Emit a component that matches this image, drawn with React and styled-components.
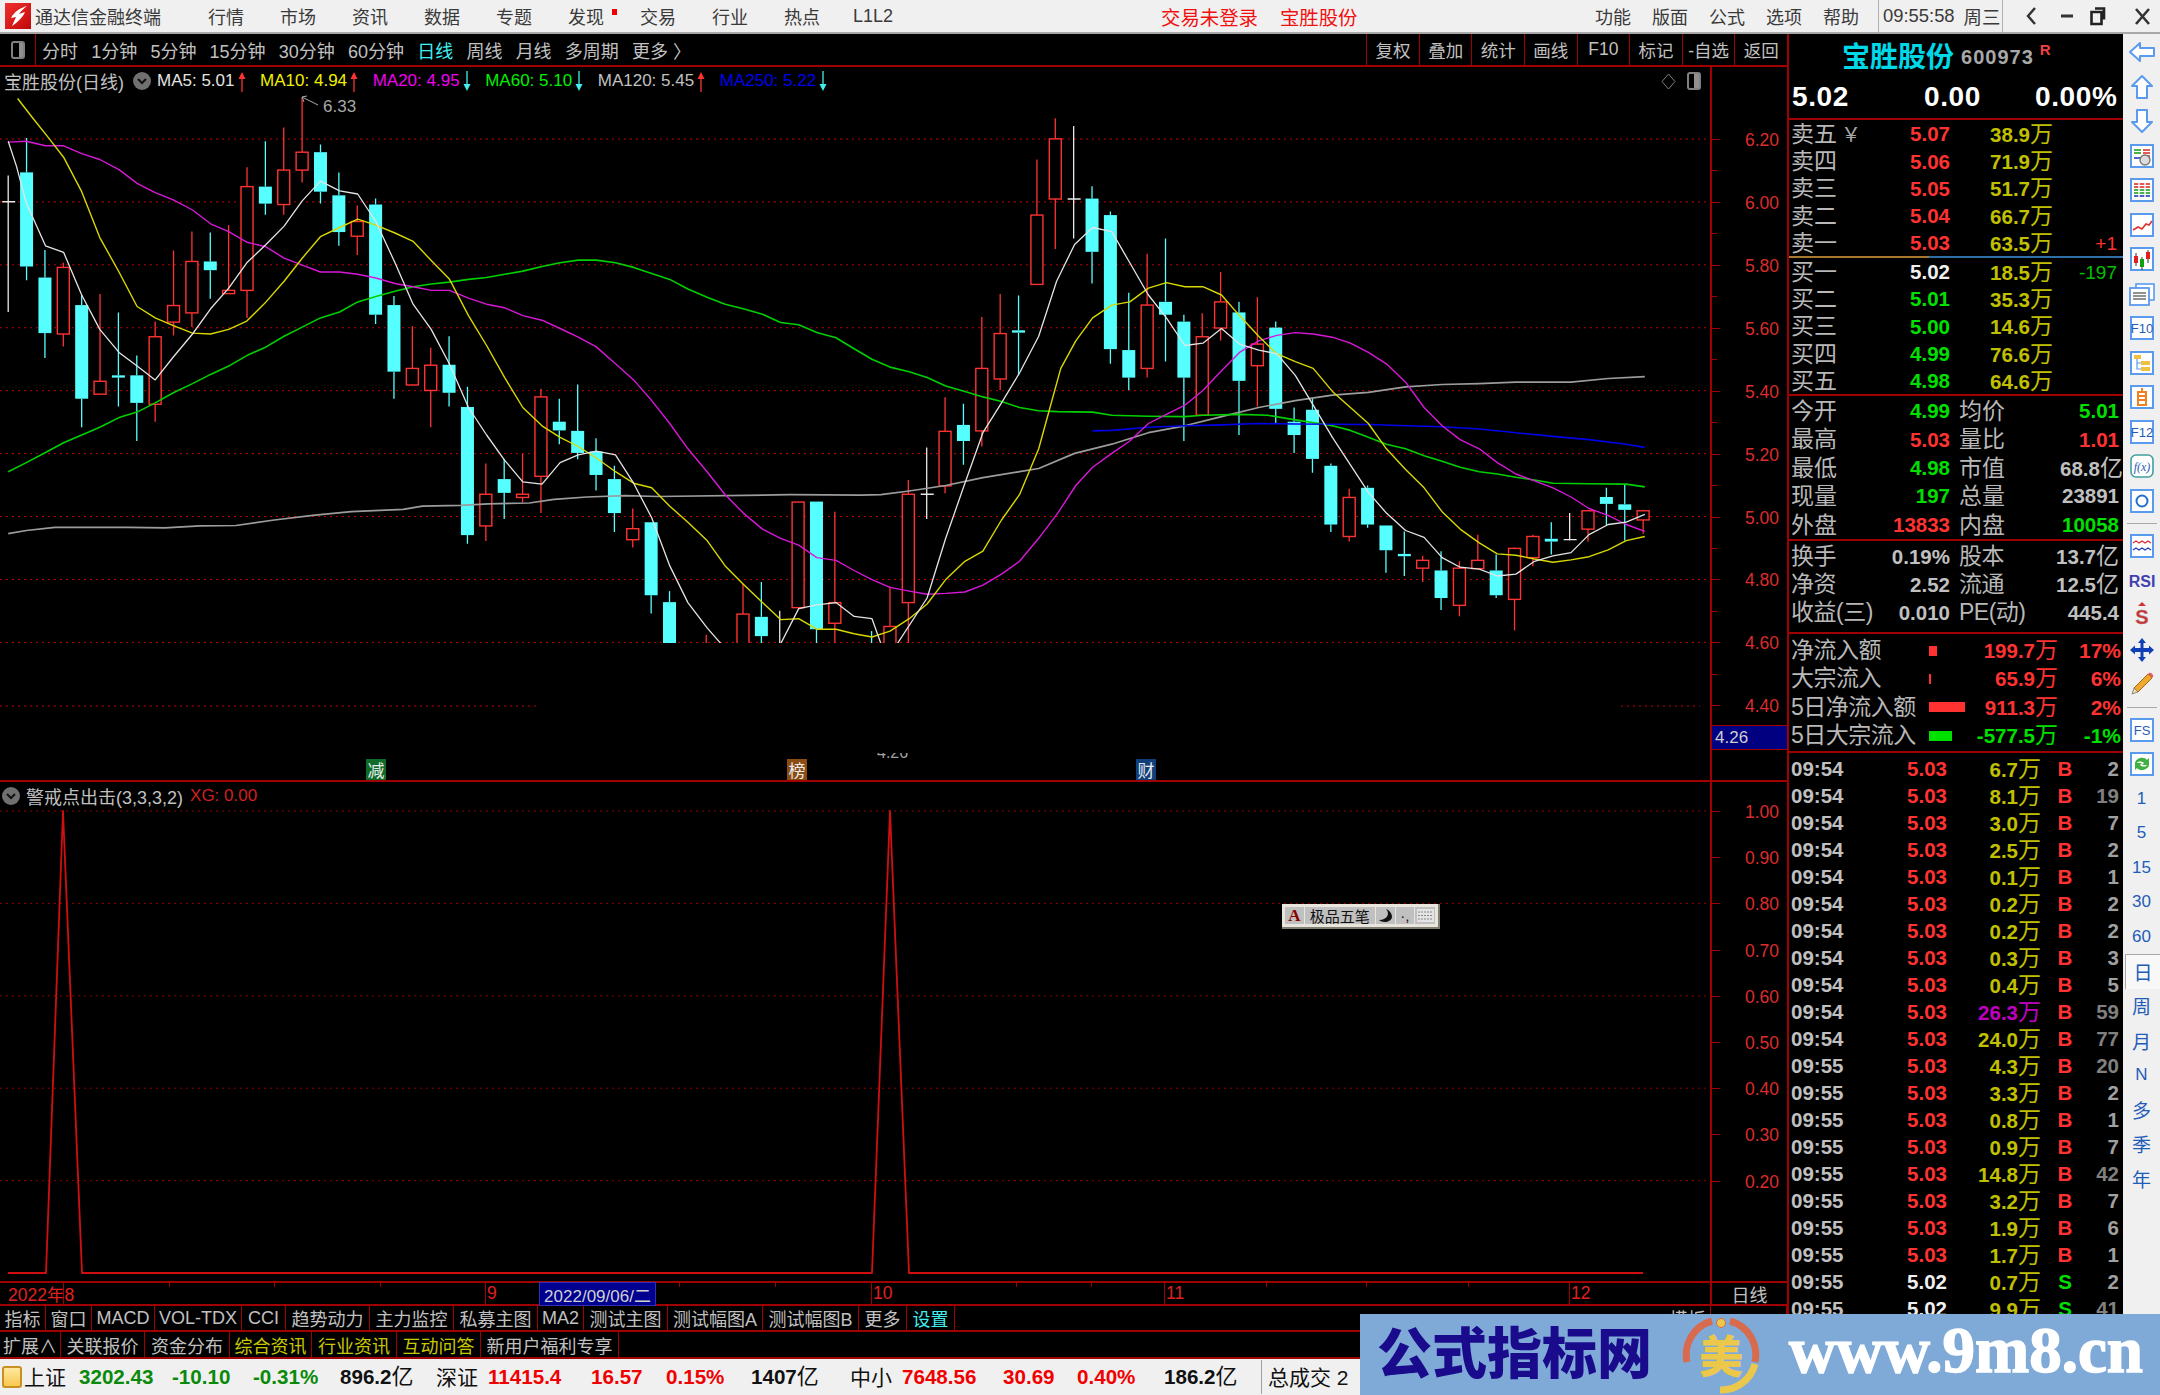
import styled, { createGlobalStyle } from 'styled-components';

const FONT = `"Liberation Sans", "Noto Sans CJK SC", sans-serif`;
const RED_LINE = '#a00000';
const GRAY = '#c0c0c0';
const TXT = {
  red: '#ff3232',
  green: '#00e000',
  white: '#f0f0f0',
  gray: '#c0c0c0',
  dim: '#808080',
  yellow: '#c0c000',
  magenta: '#c000c0',
  cyan: '#40f0f0',
};

// candle data is read off the reference crops: [kind, high, low, bodyTop, bodyBottom]
const zy = (y) => 70 + y / 2.178;
const leftPts = (pts) => pts.map(([x, y]) => [x / 1.823, zy(y)]);
const rightPts = (pts) => pts.map(([x, y]) => [860 + x / 1.668, zy(y)]);
const priceY = (p) => 139 + (6.2 - p) * 314.6;
const subY = (v) => 811 + (1 - v) * 462;

const candles = [
  ['w', 230, 527, 287, 287], ['c', 148, 458, 223, 428], ['c', 392, 627, 452, 573], ['r', 420, 602, 430, 575],
  ['c', 490, 778, 512, 716], ['r', 488, 706, 678, 706], ['c', 528, 733, 665, 670], ['c', 622, 808, 665, 725],
  ['r', 548, 766, 581, 728], ['r', 393, 578, 513, 549], ['r', 352, 560, 417, 529], ['c', 354, 498, 417, 436],
  ['r', 338, 488, 480, 487], ['r', 212, 540, 254, 480], ['c', 155, 315, 254, 291], ['r', 125, 315, 218, 293],
  ['r', 60, 245, 179, 218], ['c', 162, 291, 179, 265], ['c', 223, 383, 273, 353], ['r', 295, 403, 330, 362],
  ['c', 280, 553, 293, 533], ['c', 492, 716, 512, 657], ['r', 558, 687, 650, 686], ['r', 605, 778, 643, 698],
  ['c', 580, 733, 642, 703], ['c', 690, 1032, 734, 1013], ['r', 857, 1026, 924, 993], ['c', 847, 978, 891, 921],
  ['r', 836, 942, 924, 931], ['r', 694, 965, 712, 885], ['c', 716, 815, 766, 785], ['c', 685, 848, 786, 834],
  ['c', 802, 916, 831, 882], ['c', 862, 1006, 891, 965], ['r', 955, 1040, 999, 1023], ['c', 985, 1184, 985, 1144],
  ['c', 1135, 1400, 1159, 1400], null, ['r', 1230, 1400, 1300, 1400], ['c', 1248, 1400, 1300, 1400],
  ['r', 1118, 1400, 1185, 1400], ['c', 1115, 1400, 1191, 1233], ['w', 1178, 1400, 1300, 1300], ['r', 941, 1171, 941, 1171],
  ['c', 940, 1400, 940, 1218], ['r', 962, 1400, 1160, 1205], null, ['c', 1222, 1400, 1300, 1400],
  ['r', 1125, 1400, 1212, 1400], ['r', 893, 1400, 924, 1160], ['w', 822, 978, 924, 924], ['r', 713, 922, 787, 906],
  ['c', 727, 860, 773, 808], ['r', 538, 820, 650, 786], ['r', 488, 697, 574, 673], ['c', 491, 665, 567, 572],
  ['r', 195, 467, 316, 467], ['r', 105, 390, 150, 281], ['w', 122, 367, 281, 281], ['c', 253, 465, 280, 396],
  ['c', 308, 640, 316, 608], ['c', 485, 697, 610, 670], ['r', 400, 670, 512, 650], ['c', 367, 635, 505, 533],
  ['c', 533, 808, 548, 670], ['r', 530, 752, 581, 752], ['r', 440, 589, 505, 562], ['c', 505, 795, 528, 677],
  ['r', 495, 733, 597, 644], ['c', 548, 770, 561, 738], ['c', 735, 834, 766, 795], ['c', 714, 877, 740, 847],
  ['c', 857, 1006, 862, 990], ['r', 912, 1027, 931, 1016], ['c', 905, 997, 910, 990], ['c', 992, 1095, 992, 1046],
  ['c', 1005, 1102, 1054, 1059], ['r', 1058, 1115, 1068, 1085], ['c', 1048, 1176, 1090, 1150], ['r', 1070, 1190, 1085, 1166],
  ['r', 1012, 1086, 1068, 1086], ['c', 1055, 1150, 1090, 1144], ['r', 1040, 1220, 1042, 1153], ['r', 1012, 1081, 1016, 1062],
  ['c', 985, 1055, 1021, 1027], ['w', 965, 1025, 1023, 1023], ['r', 958, 1027, 960, 1000], ['c', 910, 992, 930, 945],
  ['c', 903, 1025, 946, 958], ['r', 958, 1010, 960, 980],
];

const maLines = [
  {
    color: '#9c9c9c', width: 1.7,
    pts: [...leftPts([[15,1010],[48,1003],[100,996],[235,996],[300,997],[365,993],[430,992],[500,980],[570,970],[640,962],[735,957],[770,950],[840,948],[890,945],[965,943],[1010,935],[1070,930],[1140,927],[1200,929],[1440,925],[1568,926]]),
      ...rightPts([[35,925],[82,917],[143,905],[205,888],[266,875],[298,868],[358,835],[420,815],[481,790],[542,775],[603,755],[665,735],[726,720],[788,708],[848,702],[910,690],[971,685],[1033,683],[1094,680],[1186,680],[1248,672],[1309,668]])],
  },
  {
    color: '#00d000', width: 1.6,
    pts: [...leftPts([[15,875],[48,855],[83,833],[116,812],[149,795],[182,778],[217,757],[250,745],[283,725],[316,703],[351,683],[384,663],[417,645],[450,622],[485,603],[518,580],[551,560],[584,540],[619,527],[652,505],[685,493],[720,482],[753,472],[786,466],[819,462],[854,456],[887,452],[920,445],[953,438],[988,428],[1021,420],[1054,414],[1087,414],[1122,420],[1155,430],[1188,443],[1221,456],[1254,477],[1289,495],[1322,510],[1355,520],[1390,532],[1423,550],[1456,555],[1489,572],[1524,583],[1557,607]]),
      ...rightPts([[20,630],[50,647],[82,657],[112,670],[143,688],[175,700],[205,712],[236,722],[266,735],[298,742],[330,744],[388,745],[420,752],[481,754],[542,755],[572,752],[633,750],[680,752],[726,762],[756,768],[788,775],[818,785],[848,800],[878,815],[910,825],[941,840],[971,852],[1001,865],[1033,875],[1063,880],[1094,887],[1125,893],[1156,900],[1216,901],[1278,902],[1309,908]])],
  },
  {
    color: '#0000e8', width: 1.6,
    pts: rightPts([[388,786],[420,785],[481,778],[542,775],[603,773],[665,770],[726,771],[848,772],[910,775],[971,777],[1033,782],[1094,790],[1156,798],[1216,805],[1278,815],[1309,822]]),
  },
  {
    color: '#d818d8', width: 1.4,
    pts: [...leftPts([[15,157],[48,155],[83,165],[116,165],[149,182],[182,195],[217,217],[250,247],[283,267],[316,283],[351,305],[384,335],[417,352],[450,375],[485,385],[518,410],[551,425],[584,440],[619,440],[652,445],[685,453],[720,465],[753,472],[786,480],[819,480],[854,497],[887,510],[920,518],[953,535],[988,545],[1021,563],[1054,582],[1087,603],[1122,640],[1155,675],[1188,720],[1221,770],[1254,825],[1289,875],[1322,925],[1355,965],[1390,1000],[1423,1020],[1456,1035],[1489,1062],[1524,1068],[1557,1090]]),
      ...rightPts([[20,1110],[50,1127],[82,1135],[112,1142],[143,1140],[175,1137],[205,1122],[236,1098],[266,1070],[298,1020],[330,965],[360,905],[388,865],[420,835],[450,808],[481,770],[511,750],[542,730],[572,698],[603,655],[633,615],[665,590],[695,578],[726,572],[756,575],[788,582],[818,595],[848,615],[878,640],[910,680],[941,735],[971,775],[1001,805],[1033,825],[1063,855],[1094,880],[1125,895],[1156,910],[1186,930],[1216,955],[1248,970],[1278,990],[1309,1005]])],
  },
  {
    color: '#d8d800', width: 1.4,
    pts: [...leftPts([[32,62],[60,105],[90,150],[116,190],[149,265],[182,365],[217,440],[250,515],[283,540],[316,557],[351,573],[384,575],[417,565],[450,547],[485,505],[518,460],[551,410],[584,363],[619,343],[652,325],[685,338],[720,355],[753,373],[786,415],[819,455],[854,535],[887,600],[920,670],[953,735],[988,775],[1021,800],[1054,820],[1087,845],[1122,875],[1155,900],[1188,910],[1221,950],[1254,985],[1289,1025],[1322,1080],[1355,1120],[1390,1160],[1423,1197],[1456,1195],[1489,1218],[1524,1218],[1557,1228]]),
      ...rightPts([[20,1235],[50,1222],[82,1195],[112,1163],[143,1110],[175,1070],[205,1048],[236,980],[266,925],[298,825],[316,740],[335,650],[360,590],[388,540],[420,512],[450,505],[481,475],[511,463],[542,472],[572,472],[603,490],[633,535],[665,580],[695,618],[726,635],[756,650],[788,700],[818,735],[848,770],[878,825],[910,870],[941,910],[971,962],[1001,1000],[1033,1030],[1063,1054],[1094,1057],[1125,1065],[1156,1072],[1186,1067],[1216,1060],[1248,1045],[1278,1025],[1309,1016]])],
  },
  {
    color: '#e4e4e4', width: 1.3,
    pts: [...leftPts([[15,155],[30,210],[48,290],[83,383],[116,397],[149,490],[182,565],[217,615],[250,645],[283,675],[316,625],[351,575],[384,520],[417,475],[450,420],[485,380],[518,340],[551,285],[584,242],[619,263],[652,270],[685,330],[720,420],[753,510],[786,565],[819,640],[854,735],[887,795],[920,850],[953,897],[988,902],[1021,855],[1054,838],[1087,830],[1122,838],[1155,900],[1188,975],[1221,1080],[1254,1160],[1289,1215],[1322,1260],[1355,1300],[1390,1300],[1423,1250],[1456,1173],[1489,1165],[1524,1160],[1557,1190]]),
      ...rightPts([[20,1195],[35,1250],[62,1250],[112,1150],[143,1020],[175,900],[205,790],[236,725],[266,660],[298,580],[328,460],[358,380],[388,343],[420,352],[450,420],[481,490],[511,540],[542,600],[572,595],[603,563],[633,597],[665,610],[695,618],[726,665],[756,730],[788,800],[818,860],[848,920],[878,965],[910,1003],[941,1018],[971,1062],[1001,1083],[1033,1087],[1063,1102],[1094,1098],[1125,1070],[1156,1058],[1186,1051],[1216,1012],[1248,990],[1278,985],[1309,968]])],
  },
];

const GlobalStyle = createGlobalStyle`
  html, body { margin: 0; padding: 0; background: #000; }
  * { box-sizing: border-box; }
`;

const Window = styled.div`
  position: relative;
  width: 2160px;
  height: 1395px;
  overflow: hidden;
  background: #000;
  display: flex;
  flex-direction: column;
  font-family: ${FONT};
`;

/* title bar */
const TitleBar = styled.div`
  height: 34px;
  flex: none;
  display: flex;
  align-items: center;
  padding-left: 5px;
  background: #f0f0f0;
  border-bottom: 2px solid #a8a8a8;
  color: #3a3a3a;
  font-size: 18px;
  white-space: nowrap;
`;
const AppName = styled.span`
  margin-left: 4px;
  margin-right: 47px;
`;
const MenuGroup = styled.div`
  display: flex;
  align-items: center;
  gap: ${(p) => p.$gap}px;
`;
const MenuItem = styled.span`
  position: relative;
  width: 36px;
  margin-left: ${(p) => p.$ml || 0}px;
`;
const NewDot = styled.i`
  position: absolute;
  left: 44px;
  top: 6px;
  width: 5px;
  height: 6px;
  background: #f00000;
`;
const Alerts = styled.div`
  display: flex;
  gap: 22px;
  margin-left: 272px;
  color: #f01010;
  font-size: 19.4px;
`;
const RightMenu = styled.div`
  display: flex;
  align-items: center;
  gap: 21px;
  margin-left: auto;
`;
const Clock = styled.div`
  width: 125px;
  height: 32px;
  margin-left: 19px;
  display: flex;
  align-items: center;
  padding-left: 4px;
  gap: 9px;
  border-left: 1px solid #b0b0b0;
  border-right: 1px solid #b0b0b0;
  font-size: 18.4px;
`;
const Controls = styled.div`
  width: 157px;
  height: 32px;
  display: flex;
  align-items: center;
  padding-left: 14px;
`;
const ControlIcon = styled.svg`
  width: 30px;
  height: 22px;
  margin-right: ${(p) => p.$mr || 0}px;
  flex: none;
`;

/* work area */
const Body = styled.div`
  flex: 1;
  min-height: 0;
  display: flex;
`;
const Main = styled.div`
  width: 1787px;
  flex: none;
  display: flex;
  flex-direction: column;
`;
const Toolbar = styled.div`
  height: 33px;
  flex: none;
  display: flex;
  align-items: stretch;
  border-bottom: 2px solid ${RED_LINE};
  color: ${GRAY};
  font-size: 18px;
`;
const PanelToggle = styled.div`
  width: 36px;
  display: flex;
  align-items: center;
  justify-content: center;
  border-right: 1px solid ${RED_LINE};
  margin-right: 6px;
`;
const ToggleGlyph = styled.div`
  width: 14px;
  height: 18px;
  border: 2px solid #808080;
  border-radius: 3px;
  background: linear-gradient(90deg, #000 0 55%, #909090 55%);
`;
const PeriodList = styled.div`
  display: flex;
  align-items: center;
  gap: 13.2px;
`;
const Period = styled.span`
  color: ${(p) => (p.$active ? TXT.cyan : GRAY)};
`;
const ToolButtons = styled.div`
  margin-left: auto;
  display: flex;
`;
const ToolButton = styled.div`
  width: 52.6px;
  display: flex;
  align-items: center;
  justify-content: center;
  border-left: 1px solid ${RED_LINE};
  font-size: 17.5px;
`;

const Pane = styled.div`
  height: ${(p) => p.$h}px;
  flex: none;
  display: flex;
  border-bottom: 2px solid ${RED_LINE};
`;
const Plot = styled.div`
  position: relative;
  width: 1712px;
  flex: none;
  border-right: 2px solid ${RED_LINE};
  overflow: hidden;
`;
const PlotSvg = styled.svg`
  display: block;
`;
const Axis = styled.div`
  position: relative;
  flex: 1;
  overflow: hidden;
`;
const AxisLabel = styled.span`
  position: absolute;
  left: 33px;
  margin-top: 1px;
  transform: translateY(-50%);
  color: #dc2c2c;
  font-size: 17.5px;
`;
const AxisTick = styled.i`
  position: absolute;
  left: 0;
  width: ${(p) => (p.$major ? 8 : 5)}px;
  height: 1px;
  background: ${RED_LINE};
`;
const LastPrice = styled.div`
  position: absolute;
  left: 0;
  right: 0;
  top: 658px;
  height: 25px;
  padding-left: 3px;
  display: flex;
  align-items: center;
  background: #000080;
  border-top: 1px solid ${RED_LINE};
  border-bottom: 1px solid ${RED_LINE};
  color: #d0d0d0;
  font-size: 17px;
`;
const Legend = styled.div`
  position: absolute;
  top: 0;
  left: 4px;
  height: 28px;
  display: flex;
  align-items: center;
  font-size: 17px;
  white-space: nowrap;
`;
const LegendName = styled.span`
  color: ${GRAY};
  font-size: 18px;
  margin-right: ${(p) => p.$mr}px;
`;
const Chevron = styled.span`
  width: 18px;
  height: 18px;
  margin-left: ${(p) => p.$ml || 0}px;
  border-radius: 50%;
  background: #707070;
  color: #111;
  margin-right: 6px;
  display: flex;
  align-items: center;
  justify-content: center;
`;
const MaValue = styled.span`
  color: ${(p) => p.$color};
  display: flex;
  align-items: center;
  gap: 3px;
  margin-right: 14.6px;
`;
const CornerTools = styled.div`
  position: absolute;
  top: 5px;
  left: 1661px;
  display: flex;
  align-items: center;
  gap: 11px;
`;
const Flag = styled.span`
  position: absolute;
  top: 692px;
  left: ${(p) => p.$x}px;
  width: 20px;
  height: 21px;
  display: flex;
  align-items: center;
  justify-content: center;
  background: ${(p) => p.$bg};
  color: #eaeaea;
  font-size: 17px;
`;
const FadedLow = styled.span`
  position: absolute;
  left: 877px;
  top: 677px;
  color: #a0a0a0;
  font-size: 16px;
  clip-path: inset(50% 0 0 0);
`;
const ImeBar = styled.div`
  position: absolute;
  left: 1282px;
  top: 122px;
  width: 158px;
  height: 25px;
  display: flex;
  gap: 1px;
  padding: 3px 3px 3px 3px;
  background: #e8e6dc;
  border-right: 2px solid #807e72;
  border-bottom: 2px solid #807e72;
`;
const ImeKey = styled.div`
  width: ${(p) => p.$w}px;
  display: flex;
  align-items: center;
  justify-content: center;
  background: #c0c0c0;
  color: #111;
  font-size: 15px;
`;
const ImeLetter = styled.span`
  color: #8a0000;
  font-family: "Liberation Serif", serif;
  font-weight: bold;
  font-size: 17px;
`;

/* date axis and tab rows */
const DateRow = styled.div`
  height: 23px;
  flex: none;
  display: flex;
  border-bottom: 2px solid ${RED_LINE};
`;
const DateAxis = styled.div`
  position: relative;
  width: 1712px;
  border-right: 2px solid ${RED_LINE};
`;
const DateMark = styled.span`
  position: absolute;
  top: 0;
  bottom: 0;
  left: ${(p) => p.$x}px;
  padding-left: 1px;
  display: flex;
  align-items: center;
  color: #e02020;
  font-size: 17.5px;
  white-space: nowrap;
  border-left: 1px solid ${RED_LINE};
`;
const DateStart = styled.span`
  position: absolute;
  left: 8px;
  top: 0;
  bottom: 0;
  display: flex;
  align-items: center;
  color: #e02020;
  font-size: 17.5px;
`;
const DateTick = styled.i`
  position: absolute;
  top: 0;
  left: ${(p) => p.$x}px;
  width: 1px;
  height: ${(p) => p.$h || 4}px;
  background: ${RED_LINE};
`;
const CursorDate = styled.span`
  position: absolute;
  left: 539px;
  top: -1px;
  width: 117px;
  height: 24px;
  display: flex;
  align-items: center;
  justify-content: center;
  background: #000090;
  color: #d0d0d0;
  font-size: 17px;
  border: 1px solid #3030b0;
`;
const DateCell = styled.div`
  flex: 1;
  display: flex;
  align-items: center;
  justify-content: center;
  color: ${GRAY};
  font-size: 18px;
`;
const TabRow = styled.div`
  height: ${(p) => p.$h}px;
  flex: none;
  display: flex;
  border-bottom: 2px solid ${RED_LINE};
`;
const Tab = styled.div`
  width: ${(p) => p.$w}px;
  flex: none;
  display: flex;
  align-items: center;
  justify-content: center;
  border-right: 1px solid ${RED_LINE};
  color: ${(p) => p.$color || GRAY};
  font-size: 18px;
  white-space: nowrap;
  overflow: hidden;
  margin-left: ${(p) => (p.$push ? 'auto' : 0)};
`;

/* quote panel */
const Panel = styled.div`
  width: 336px;
  flex: none;
  border-left: 2px solid ${RED_LINE};
  overflow: hidden;
`;
const NameRow = styled.div`
  height: 42px;
  padding-left: 53px;
  display: flex;
  align-items: center;
`;
const StockName = styled.span`
  color: #00d8e8;
  font-size: 28px;
  font-weight: bold;
`;
const StockCode = styled.span`
  margin-left: 7px;
  margin-top: 4px;
  color: #a8a8a8;
  font-size: 20px;
  font-weight: bold;
  letter-spacing: 1px;
`;
const StockFlag = styled.span`
  margin-left: 6px;
  margin-top: -12px;
  color: #f04040;
  font-size: 15px;
  font-weight: bold;
`;
const PriceRow = styled.div`
  height: 44px;
  padding-left: 3px;
  display: grid;
  grid-template-columns: 132px 111px 1fr;
  align-items: center;
  color: #fff;
  font-size: 28px;
  font-weight: bold;
  letter-spacing: 0.6px;
  border-bottom: 2px solid ${RED_LINE};
`;
const SplitLine = styled.div`
  height: 2px;
  background: linear-gradient(90deg, #a87830 0 140px, #2f6fa8 140px);
`;
const Section = styled.div`
  padding-bottom: ${(p) => p.$pb || 0}px;
  border-bottom: ${(p) => (p.$line ? `2px solid ${RED_LINE}` : 'none')};
`;
const Row = styled.div`
  height: ${(p) => p.$h}px;
  padding-left: 2px;
  padding-top: ${(p) => p.$pt || 0}px;
  display: grid;
  grid-template-columns: ${(p) => p.$cols};
  grid-template-rows: 100%;
  align-items: center;
  white-space: nowrap;
  line-height: 1;
`;
const Label = styled.span`
  color: #b8b8b8;
  font-size: 23px;
  padding-left: ${(p) => p.$pl || 0}px;
  letter-spacing: ${(p) => (p.$tight ? '-0.5px' : 0)};
`;
const Num = styled.span`
  color: ${(p) => p.$color || TXT.gray};
  font-size: ${(p) => p.$size || 20.5}px;
  font-weight: ${(p) => (p.$thin ? 'normal' : 'bold')};
  text-align: ${(p) => p.$align || 'right'};
`;
const Unit = styled.span`
  font-size: 23px;
  font-weight: normal;
`;
const FlowBar = styled.i`
  display: block;
  height: ${(p) => p.$h || 10}px;
  width: ${(p) => p.$w}px;
  background: ${(p) => p.$color};
`;
const CashMark = styled.span`
  color: #a8a8a8;
  font-size: 20px;
  margin-left: 4px;
`;

/* sidebar */
const Sidebar = styled.div`
  flex: 1;
  padding-top: 1px;
  background: #f0f0f0;
  display: flex;
  flex-direction: column;
`;
const Slot = styled.div`
  height: 34.5px;
  flex: none;
  display: flex;
  align-items: center;
  justify-content: center;
  color: #1f5cb8;
  font-size: ${(p) => p.$size || 19}px;
  background: ${(p) => (p.$active ? '#f8f8f8' : 'transparent')};
  border-top: ${(p) => (p.$active ? '1px solid #a8a8a8' : 'none')};
  border-left: ${(p) => (p.$active ? '1px solid #a8a8a8' : 'none')};
  margin-left: ${(p) => (p.$active ? 2 : 0)}px;
`;
const SideRule = styled.div`
  height: 11px;
  flex: none;
  position: relative;
  &::after {
    content: '';
    position: absolute;
    left: 4px;
    right: 3px;
    top: 5px;
    height: 1px;
    background: #a8a8a8;
  }
`;

/* status bar */
const StatusBar = styled.div`
  height: 36px;
  flex: none;
  display: flex;
  align-items: center;
  padding-left: 2px;
  background: #f0f0f0;
  white-space: nowrap;
  line-height: 1;
`;
const IndexBadge = styled.i`
  width: 20px;
  height: 22px;
  margin-right: 2px;
  border: 2px solid #c89020;
  border-radius: 3px;
  background: linear-gradient(#ffe8a0, #f8c850);
`;
const StatusCell = styled.span`
  width: ${(p) => p.$w}px;
  flex: none;
  color: ${(p) => p.$color || '#111'};
  font-size: ${(p) => (p.$cjk ? 21 : 20.6)}px;
  font-weight: ${(p) => (p.$cjk ? 'normal' : 'bold')};
`;
const StatusUnit = styled.span`
  font-size: 22px;
  font-weight: normal;
`;
const TotalCell = styled(StatusCell)`
  border-left: 1px solid #a0a0a0;
  padding-left: 6px;
  height: 34px;
  display: flex;
  align-items: center;
`;

/* site stamp over the lower right corner */
const Stamp = styled.div`
  position: absolute;
  left: 1360px;
  top: 1314px;
  width: 800px;
  height: 81px;
  display: flex;
  align-items: center;
  padding-left: 17px;
  background: #7faad8;
  white-space: nowrap;
`;
const StampTitle = styled.span`
  width: 275px;
  color: #1a0a8c;
  font-size: 55px;
  font-weight: 900;
  line-height: 1;
`;
const StampEmblem = styled.svg`
  margin-left: 30px;
  flex: none;
`;
const StampUrl = styled.span`
  margin-left: 29px;
  margin-top: -8px;
  color: #fff;
  font-family: "Liberation Serif", serif;
  font-size: 65px;
  font-weight: bold;
  -webkit-text-stroke: 1.5px #fff;
`;

const Arrow = ({ up, color }) => (
  <svg width="8" height="21" viewBox="0 0 8 21">
    {up ? (
      <>
        <path d="M4 8v13" stroke={color} strokeWidth="1.3" />
        <path d="M0.5 8 4 1l3.5 7z" fill={color} />
      </>
    ) : (
      <>
        <path d="M4 0v13" stroke={color} strokeWidth="1.3" />
        <path d="M0.5 13 4 20l3.5-7z" fill={color} />
      </>
    )}
  </svg>
);

const ChevronGlyph = () => (
  <svg width="10" height="7" viewBox="0 0 10 7">
    <path d="M1 1l4 4 4-4" fill="none" stroke="#111" strokeWidth="2" />
  </svg>
);

const AppLogo = () => (
  <svg width="26" height="26" viewBox="0 0 26 26">
    <defs>
      <linearGradient id="logoRed" x1="0" y1="0" x2="1" y2="1">
        <stop offset="0" stopColor="#f03030" />
        <stop offset="1" stopColor="#c00808" />
      </linearGradient>
    </defs>
    <rect width="26" height="26" fill="url(#logoRed)" />
    <path d="M22 3C15 5 9 9 6 15l5-1-4 9c5-3 11-9 13-14l-6 2c2-3 5-6 8-8z" fill="#fff" />
  </svg>
);

const Frame = ({ children, w = 24, h = 24 }) => (
  <svg width={w} height={h} viewBox="0 0 24 24">
    <rect x="1" y="1" width="22" height="22" fill="#fff" stroke="#5a9bf0" strokeWidth="2" />
    {children}
  </svg>
);

const lines = (color, ys, x1, x2) =>
  ys.map((y) => <path key={`${color}${y}${x1}`} d={`M${x1} ${y}H${x2}`} stroke={color} strokeWidth="1.6" />);

const FrameText = ({ children, size = 11, color = '#1f5cb8' }) => (
  <text x="12" y="16.5" textAnchor="middle" fontSize={size} fontFamily="Liberation Sans" fill={color}>
    {children}
  </text>
);

const HollowArrow = ({ d, w = 28, h = 24 }) => (
  <svg width={w} height={h} viewBox="0 0 28 24">
    <path d={d} fill="#fff" stroke="#5a9bf0" strokeWidth="2" strokeLinejoin="round" />
  </svg>
);

const sideIcons = [
  <HollowArrow key="a1" d="M2 12 12 3v5h14v8H12v5z" />,
  <HollowArrow key="a2" d="M14 1 24 11h-5v12H9V11H4z" />,
  <HollowArrow key="a3" d="M14 23 24 13h-5V1H9v12H4z" />,
  <Frame key="b1">
    {lines('#20a020', [6, 9], 4, 11)}{lines('#e03030', [6, 9, 12], 13, 20)}{lines('#2040c0', [14], 4, 11)}
    <circle cx="15" cy="16" r="5" fill="#ddd" stroke="#777" strokeWidth="1.4" />
  </Frame>,
  <Frame key="b2">
    {lines('#e03030', [6, 9], 4, 20)}{lines('#20a020', [12, 15], 4, 20)}{lines('#2040c0', [18], 4, 20)}
    <path d="M9 4v16M15 4v16" stroke="#fff" strokeWidth="1.4" />
  </Frame>,
  <Frame key="b3"><path d="M3 17l5-3 4 2 4-5 3 1 3-4" fill="none" stroke="#e03030" strokeWidth="1.6" /></Frame>,
  <Frame key="b4">
    <path d="M6 6v13M12 10v13M18 3v13" stroke="#333" strokeWidth="1" />
    <rect x="4" y="9" width="4" height="7" fill="#e02020" />
    <rect x="10" y="12" width="4" height="8" fill="#10a010" />
    <rect x="16" y="5" width="4" height="7" fill="#e02020" />
  </Frame>,
  <svg key="b5" width="26" height="24" viewBox="0 0 26 24">
    <rect x="7" y="2" width="18" height="16" fill="#fff" stroke="#5a9bf0" strokeWidth="1.6" />
    <rect x="1" y="6" width="19" height="17" fill="#fff" stroke="#5a9bf0" strokeWidth="1.8" />
    {lines('#777', [11, 14, 17], 4, 17)}
  </svg>,
  <Frame key="b6"><FrameText size={13}>F10</FrameText></Frame>,
  <Frame key="b7">
    <rect x="4" y="4" width="7" height="4" fill="#f0c040" />
    <rect x="11" y="10" width="9" height="4" fill="#f0c040" />
    <rect x="11" y="16" width="9" height="4" fill="#f0c040" />
    <path d="M7 8v10h4M7 12h4" fill="none" stroke="#5a9bf0" strokeWidth="1.2" />
  </Frame>,
  <Frame key="b8">
    <path d="M8 7h8v13H8zM8 11h8M8 15h8M12 3v4" fill="none" stroke="#f08020" strokeWidth="2" />
  </Frame>,
  <Frame key="b9"><FrameText size={13}>F12</FrameText></Frame>,
  <svg key="b10" width="24" height="24" viewBox="0 0 24 24">
    <rect x="1" y="1" width="22" height="22" rx="5" fill="#fff" stroke="#40a0a0" strokeWidth="1.6" />
    <text x="12" y="17" textAnchor="middle" fontSize="12" fontFamily="Liberation Serif" fontStyle="italic" fill="#1f5cb8">f(x)</text>
  </svg>,
  <Frame key="b11"><circle cx="12" cy="12" r="5.5" fill="none" stroke="#2070d0" strokeWidth="2" /></Frame>,
  'rule',
  <Frame key="c1">
    <path d="M3 9l3-2 3 2 3-2 3 2 3-2 3 2" fill="none" stroke="#e03030" strokeWidth="1.4" />
    <path d="M3 16l3-2 3 2 3-2 3 2 3-2 3 2" fill="none" stroke="#2040c0" strokeWidth="1.4" />
  </Frame>,
  <svg key="c2" width="28" height="24" viewBox="0 0 28 24">
    <text x="14" y="18" textAnchor="middle" fontSize="16" fontWeight="bold" fontFamily="Liberation Sans" fill="#4040b0">RSI</text>
  </svg>,
  <svg key="c3" width="24" height="26" viewBox="0 0 24 26">
    <path d="M12 0l4 4H8z" fill="#d03030" />
    <text x="12" y="22" textAnchor="middle" fontSize="20" fontWeight="bold" fontFamily="Liberation Sans" fill="#d03030" stroke="#999" strokeWidth="0.4">S</text>
  </svg>,
  <svg key="c4" width="26" height="26" viewBox="0 0 26 26">
    <path d="M13 1l4 5h-2.500v5H20V8.500l5 4.500-5 4.500V15h-5.500v5H17l-4 5-4-5h2.500v-5H6v2.500L1 13l5-4.500V11h5.500V6H9z" fill="#1040b8" />
  </svg>,
  <svg key="c5" width="26" height="26" viewBox="0 0 26 26">
    <path d="M5 17 19 3l4 4L9 21z" fill="#f0a830" stroke="#a06818" strokeWidth="1" />
    <path d="M5 17l4 4-6 2z" fill="#f0d8a8" stroke="#777" strokeWidth="0.8" />
    <path d="M19 3l4 4 1-1c1-2-2-5-4-4z" fill="#e06060" />
  </svg>,
  'rule',
  <Frame key="d1"><FrameText size={13}>FS</FrameText></Frame>,
  <Frame key="d2">
    <path d="M5 11c1-5 9-7 12-3l2-2v7h-7l2-2c-2-2-6-2-7 0zM19 13c-1 5-9 7-12 3l-2 2v-7h7l-2 2c2 2 6 2 7 0z" fill="#40b040" />
  </Frame>,
];

const sidePeriods = [
  { t: '1', size: 17 }, { t: '5', size: 17 }, { t: '15', size: 17 }, { t: '30', size: 17 }, { t: '60', size: 17 },
  { t: '日', active: true }, { t: '周' }, { t: '月' }, { t: 'N', size: 17 }, { t: '多' }, { t: '季' }, { t: '年' },
];

const periods = ['分时', '1分钟', '5分钟', '15分钟', '30分钟', '60分钟', '日线', '周线', '月线', '多周期'];
const tools = ['复权', '叠加', '统计', '画线', 'F10', '标记', '-自选', '返回'];
const maLegend = [
  { t: 'MA5: 5.01', c: '#e4e4e4', up: true },
  { t: 'MA10: 4.94', c: '#f0f000', up: true },
  { t: 'MA20: 4.95', c: '#f000f0', up: false },
  { t: 'MA60: 5.10', c: '#00f000', up: false },
  { t: 'MA120: 5.45', c: '#c0c0c0', up: true },
  { t: 'MA250: 5.22', c: '#0000f0', up: false },
];
const tabsA = [
  ['指标', 46], ['窗口', 46], ['MACD', 63], ['VOL-TDX', 87], ['CCI', 44], ['趋势动力', 84], ['主力监控', 84],
  ['私募主图', 84], ['MA2', 46], ['测试主图', 84], ['测试幅图A', 95], ['测试幅图B', 96], ['更多', 48],
];
const tabsB = [
  ['扩展∧', 61], ['关联报价', 84], ['资金分布', 85], ['综合资讯', 82, '#c8c800'], ['行业资讯', 85, '#c8c800'],
  ['互动问答', 84, '#c8c800'], ['新用户福利专享', 138],
];

const sells = [
  ['卖五', '5.07', '38.9'], ['卖四', '5.06', '71.9'], ['卖三', '5.05', '51.7'], ['卖二', '5.04', '66.7'], ['卖一', '5.03', '63.5'],
];
const buys = [
  ['买一', '5.02', '18.5', TXT.white], ['买二', '5.01', '35.3', TXT.green], ['买三', '5.00', '14.6', TXT.green],
  ['买四', '4.99', '76.6', TXT.green], ['买五', '4.98', '64.6', TXT.green],
];
const stats = [
  ['今开', '4.99', TXT.green, '均价', '5.01', TXT.green],
  ['最高', '5.03', TXT.red, '量比', '1.01', TXT.red],
  ['最低', '4.98', TXT.green, '市值', '68.8', TXT.gray, '亿'],
  ['现量', '197', TXT.green, '总量', '23891', TXT.gray],
  ['外盘', '13833', TXT.red, '内盘', '10058', TXT.green],
];
const finance = [
  ['换手', '0.19%', '股本', '13.7', '亿'],
  ['净资', '2.52', '流通', '12.5', '亿'],
  ['收益(三)', '0.010', 'PE(动)', '445.4'],
];
const flows = [
  ['净流入额', 8, '199.7', '17%', TXT.red, '#ff3232'],
  ['大宗流入', 1.5, '65.9', '6%', TXT.red, '#ff3232'],
  ['5日净流入额', 36, '911.3', '2%', TXT.red, '#ff3232'],
  ['5日大宗流入', 23, '-577.5', '-1%', TXT.green, '#00e000'],
];
const trades = [
  [4, '6.7', 2], [4, '8.1', 19], [4, '3.0', 7], [4, '2.5', 2], [4, '0.1', 1], [4, '0.2', 2], [4, '0.2', 2],
  [4, '0.3', 3], [4, '0.4', 5], [4, '26.3', 59], [4, '24.0', 77], [5, '4.3', 20], [5, '3.3', 2], [5, '0.8', 1],
  [5, '0.9', 7], [5, '14.8', 42], [5, '3.2', 7], [5, '1.9', 6], [5, '1.7', 1], [5, '0.7', 2], [5, '9.9', 41],
];

const statusCells = [
  { t: '上证', w: 55, cjk: true },
  { t: '3202.43', w: 93, c: '#0a8a0a' },
  { t: '-10.10', w: 81, c: '#0a8a0a' },
  { t: '-0.31%', w: 87, c: '#0a8a0a' },
  { t: '896.2', w: 96, unit: '亿' },
  { t: '深证', w: 52, cjk: true },
  { t: '11415.4', w: 103, c: '#f00000' },
  { t: '16.57', w: 75, c: '#f00000' },
  { t: '0.15%', w: 85, c: '#f00000' },
  { t: '1407', w: 99, unit: '亿' },
  { t: '中小', w: 52, cjk: true },
  { t: '7648.56', w: 101, c: '#f00000' },
  { t: '30.69', w: 74, c: '#f00000' },
  { t: '0.40%', w: 87, c: '#f00000' },
  { t: '186.2', w: 97, unit: '亿' },
];

const toPath = (pts) => pts.map(([x, y], i) => `${i ? 'L' : 'M'}${x.toFixed(1)} ${y.toFixed(1)}`).join('');

const Candle = ({ data, i }) => {
  if (!data) return null;
  const [kind, h, l, top, bot] = data;
  const x = 8.2 + i * 18.37;
  const color = kind === 'c' ? '#55ffff' : kind === 'r' ? '#ff3232' : '#e8e8e8';
  const yh = zy(h);
  const yl = zy(l);
  const yt = zy(top);
  const yb = zy(bot);
  if (kind === 'w') {
    return <path d={`M${x} ${yh}V${yl}M${x - 6} ${yt}H${x + 7}`} stroke={color} strokeWidth="1.3" />;
  }
  return (
    <g>
      <path d={`M${x} ${yh}V${yt}M${x} ${yb}V${yl}`} stroke={color} strokeWidth="1.3" />
      {kind === 'c' ? (
        <rect x={x - 6.5} y={yt} width="13" height={Math.max(yb - yt, 2)} fill={color} />
      ) : (
        <rect x={x - 6} y={yt} width="12" height={Math.max(yb - yt, 2)} fill="#000" stroke={color} strokeWidth="1.4" />
      )}
    </g>
  );
};

const gridPrices = [6.2, 6.0, 5.8, 5.6, 5.4, 5.2, 5.0, 4.8, 4.6];

const MainChart = () => (
  <PlotSvg width="1710" height="713" viewBox="0 67 1710 713">
    <defs>
      <clipPath id="upperArea">
        <rect x="0" y="67" width="1710" height="576" />
      </clipPath>
    </defs>
    {gridPrices.map((p) => (
      <path key={p} d={`M0 ${priceY(p)}H1710`} stroke="#c00000" strokeWidth="1" strokeDasharray="2 4" />
    ))}
    <path d="M0 706H537M1621 706H1700" stroke="#c00000" strokeWidth="1" strokeDasharray="2 4" />
    <g clipPath="url(#upperArea)">
      {candles.map((c, i) => (
        <Candle key={i} data={c} i={i} />
      ))}
      {maLines.map((m) => (
        <path key={m.color} d={toPath(m.pts)} fill="none" stroke={m.color} strokeWidth={m.width} strokeLinejoin="round" />
      ))}
    </g>
    <path d="M302 97l16 8M302 97l5 -1M302 97l2 5" fill="none" stroke="#a8a8a8" strokeWidth="1" />
    <text x="323" y="112" fontSize="17" fontFamily="Liberation Sans" fill="#a8a8a8">6.33</text>
  </PlotSvg>
);

const SubChart = () => (
  <PlotSvg width="1710" height="498" viewBox="0 782 1710 498">
    {[1, 0.8, 0.6, 0.4, 0.2].map((v) => (
      <path key={v} d={`M0 ${subY(v)}H1710`} stroke="#900000" strokeWidth="1" strokeDasharray="2 4" />
    ))}
    <path
      d="M8 1273H46L63 811 82 1273H872L890 811 909 1273H1643"
      fill="none"
      stroke="#d01010"
      strokeWidth="1.8"
      strokeLinejoin="round"
    />
  </PlotSvg>
);

const Moon = () => (
  <svg width="16" height="16" viewBox="0 0 16 16">
    <path d="M9 1c4 4 2 11-7 11 3 3 12 3 13-3 0-4-3-7-6-8z" fill="#111" />
  </svg>
);
const KeyboardGlyph = () => (
  <svg width="17" height="13" viewBox="0 0 17 13">
    <rect width="17" height="13" fill="#e4e4e4" />
    <path d="M1 3h15M1 6.500h15M1 10h15" stroke="#888" strokeWidth="1" strokeDasharray="2 1" />
  </svg>
);

const StampLogo = () => (
  <StampEmblem width="78" height="78" viewBox="0 0 78 78">
    <path d="M5 46A35 35 0 0 1 30 5" fill="none" stroke="#d86a4e" strokeWidth="7" />
    <path d="M48 5A35 35 0 0 1 73 46" fill="none" stroke="#d86a4e" strokeWidth="7" />
    <path d="M73 48A35 35 0 0 1 38 74" fill="none" stroke="#ecc84a" strokeWidth="7" />
    <circle cx="39" cy="7" r="4.500" fill="#ecc84a" stroke="#d86a4e" />
    <text x="39" y="57" textAnchor="middle" fontSize="44" fontWeight="900" fontFamily="Noto Sans CJK SC" fill="#ecc84a">美</text>
  </StampEmblem>
);

export default function App() {
  return (
    <Window>
      <GlobalStyle />
      <TitleBar>
        <AppLogo />
        <AppName>通达信金融终端</AppName>
        <MenuGroup $gap={36}>
          <MenuItem>行情</MenuItem>
          <MenuItem>市场</MenuItem>
          <MenuItem>资讯</MenuItem>
          <MenuItem>数据</MenuItem>
          <MenuItem>专题</MenuItem>
          <MenuItem>发现<NewDot /></MenuItem>
          <MenuItem>交易</MenuItem>
          <MenuItem>行业</MenuItem>
          <MenuItem>热点</MenuItem>
          <MenuItem $ml={-3}>L1L2</MenuItem>
        </MenuGroup>
        <Alerts>
          <span>交易未登录</span>
          <span>宝胜股份</span>
        </Alerts>
        <RightMenu>
          <MenuItem>功能</MenuItem>
          <MenuItem>版面</MenuItem>
          <MenuItem>公式</MenuItem>
          <MenuItem>选项</MenuItem>
          <MenuItem>帮助</MenuItem>
        </RightMenu>
        <Clock>
          <span>09:55:58</span>
          <span>周三</span>
        </Clock>
        <Controls>
          <ControlIcon viewBox="0 0 30 22" $mr={5}>
            <path d="M18 3l-7 8 7 8" fill="none" stroke="#333" strokeWidth="2.4" />
          </ControlIcon>
          <ControlIcon viewBox="0 0 30 22">
            <path d="M9 11h12" stroke="#333" strokeWidth="3" />
          </ControlIcon>
          <ControlIcon viewBox="0 0 30 22" $mr={16}>
            <path d="M11 7h-1.500v12h10V7zM13 3.500h9v11" fill="none" stroke="#222" strokeWidth="2.6" />
          </ControlIcon>
          <ControlIcon viewBox="0 0 30 22">
            <path d="M8 4l13 15M21 4L8 19" stroke="#333" strokeWidth="2.6" />
          </ControlIcon>
        </Controls>
      </TitleBar>

      <Body>
        <Main>
          <Toolbar>
            <PanelToggle><ToggleGlyph /></PanelToggle>
            <PeriodList>
              {periods.map((p) => (
                <Period key={p} $active={p === '日线'}>{p}</Period>
              ))}
              <Period>更多 〉</Period>
            </PeriodList>
            <ToolButtons>
              {tools.map((t) => (
                <ToolButton key={t}>{t}</ToolButton>
              ))}
            </ToolButtons>
          </Toolbar>

          <Pane $h={715}>
            <Plot>
              <MainChart />
              <Legend>
                <LegendName $mr={9}>宝胜股份(日线)</LegendName>
                <Chevron><ChevronGlyph /></Chevron>
                {maLegend.map((m) => (
                  <MaValue key={m.t} $color={m.c}>
                    {m.t}
                    <Arrow up={m.up} color={m.up ? '#ff3232' : '#40f0f0'} />
                  </MaValue>
                ))}
              </Legend>
              <CornerTools>
                <svg width="15" height="17" viewBox="0 0 15 17">
                  <path d="M7.500 1 14 8.500 7.500 16 1 8.500z" fill="none" stroke="#808080" />
                </svg>
                <ToggleGlyph />
              </CornerTools>
              <FadedLow>4.26</FadedLow>
              <Flag $bg="#0c6c28" $x={366}>减</Flag>
              <Flag $bg="#8a4c14" $x={787}>榜</Flag>
              <Flag $bg="#10407c" $x={1136}>财</Flag>
            </Plot>
            <Axis>
              {[6.2, 6.1, 6.0, 5.9, 5.8, 5.7, 5.6, 5.5, 5.4, 5.3, 5.2, 5.1, 5.0, 4.9, 4.8, 4.7, 4.6, 4.5, 4.4].map((p, i) => (
                <AxisTick key={p} $major={i % 2 === 0} style={{ top: priceY(p) - 67 }} />
              ))}
              {[...gridPrices, 4.4].map((p) => (
                <AxisLabel key={p} style={{ top: priceY(p) - 67 }}>{p.toFixed(2)}</AxisLabel>
              ))}
              <LastPrice>4.26</LastPrice>
            </Axis>
          </Pane>

          <Pane $h={501}>
            <Plot>
              <SubChart />
              <Legend>
                <Chevron $ml={-2}><ChevronGlyph /></Chevron>
                <LegendName $mr={7}>警戒点出击(3,3,3,2)</LegendName>
                <MaValue $color="#d02020">XG: 0.00</MaValue>
              </Legend>
              <ImeBar>
                <ImeKey $w={19}><ImeLetter>A</ImeLetter></ImeKey>
                <ImeKey $w={71}>极品五笔</ImeKey>
                <ImeKey $w={19}><Moon /></ImeKey>
                <ImeKey $w={19}>·,</ImeKey>
                <ImeKey $w={20}><KeyboardGlyph /></ImeKey>
              </ImeBar>
            </Plot>
            <Axis>
              {[1, 0.9, 0.8, 0.7, 0.6, 0.5, 0.4, 0.3, 0.2].map((v) => (
                <AxisTick key={v} $major style={{ top: subY(v) - 782 }} />
              ))}
              {[1, 0.9, 0.8, 0.7, 0.6, 0.5, 0.4, 0.3, 0.2].map((v) => (
                <AxisLabel key={v} style={{ top: subY(v) - 782 }}>{v.toFixed(2)}</AxisLabel>
              ))}
            </Axis>
          </Pane>

          <DateRow>
            <DateAxis>
              <DateStart>2022年8</DateStart>
              <DateTick $x={63} $h={21} />
              {[169, 274, 380, 679, 775, 1016, 1091, 1266, 1366, 1468].map((x) => (
                <DateTick key={x} $x={x} />
              ))}
              <DateMark $x={485}>9</DateMark>
              <DateMark $x={871}>10</DateMark>
              <DateMark $x={1164}>11</DateMark>
              <DateMark $x={1569}>12</DateMark>
              <CursorDate>2022/09/06/二</CursorDate>
            </DateAxis>
            <DateCell>日线</DateCell>
          </DateRow>

          <TabRow $h={26}>
            {tabsA.map(([t, w]) => (
              <Tab key={t} $w={w}>{t}</Tab>
            ))}
            <Tab $w={48} $color={TXT.cyan}>设置</Tab>
            <Tab $w={46} $push>模板</Tab>
            <Tab $w={76}>·</Tab>
          </TabRow>
          <TabRow $h={27}>
            {tabsB.map(([t, w, c]) => (
              <Tab key={t} $w={w} $color={c}>{t}</Tab>
            ))}
          </TabRow>
        </Main>

        <Panel>
          <NameRow>
            <StockName>宝胜股份</StockName>
            <StockCode>600973</StockCode>
            <StockFlag>R</StockFlag>
          </NameRow>
          <PriceRow>
            <span>5.02</span>
            <span>0.00</span>
            <span>0.00%</span>
          </PriceRow>

          <Section>
            {sells.map(([l, p, v], i) => (
              <Row key={l} $h={27.2} $pt={2} $cols="100px 59px 103px 64px">
                <Label>{l}{i === 0 && <CashMark>￥</CashMark>}</Label>
                <Num $color={TXT.red}>{p}</Num>
                <Num $color={TXT.yellow}>{v}<Unit>万</Unit></Num>
                <Num $color={TXT.red} $thin $size={19}>{i === 4 ? '+1' : ''}</Num>
              </Row>
            ))}
          </Section>
          <SplitLine />
          <Section $line>
            {buys.map(([l, p, v, c], i) => (
              <Row key={l} $h={27.2} $pt={2} $cols="100px 59px 103px 64px">
                <Label>{l}</Label>
                <Num $color={c}>{p}</Num>
                <Num $color={TXT.yellow}>{v}<Unit>万</Unit></Num>
                <Num $color="#00c000" $thin $size={19}>{i === 0 ? '-197' : ''}</Num>
              </Row>
            ))}
          </Section>

          <Section $line $pb={1}>
            {stats.map(([l1, v1, c1, l2, v2, c2, u]) => (
              <Row key={l1} $h={28.4} $pt={3} $cols="100px 59px 110px 59px">
                <Label>{l1}</Label>
                <Num $color={c1}>{v1}</Num>
                <Label $pl={9}>{l2}</Label>
                <Num $color={c2}>{v2}{u && <Unit>{u}</Unit>}</Num>
              </Row>
            ))}
          </Section>
          <Section $line $pb={7}>
            {finance.map(([l1, v1, l2, v2, u]) => (
              <Row key={l1} $h={28} $pt={4} $cols="100px 59px 90px 79px">
                <Label $tight>{l1}</Label>
                <Num>{v1}</Num>
                <Label $pl={9} $tight>{l2}</Label>
                <Num>{v2}{u && <Unit>{u}</Unit>}</Num>
              </Row>
            ))}
          </Section>
          <Section $line $pb={4}>
            {flows.map(([l, w, v, pct, c, bar]) => (
              <Row key={l} $h={28.4} $pt={5} $cols="138px 38px 91px 63px">
                <Label $tight>{l}</Label>
                <FlowBar $w={w} $color={bar} />
                <Num $color={c}>{v}<Unit>万</Unit></Num>
                <Num $color={c} $size={21}>{pct}</Num>
              </Row>
            ))}
          </Section>

          {trades.map(([m, v, n], i) => {
            const big = Number(v) >= 26;
            const down = i >= 19;
            return (
              <Row key={i} $h={27} $pt={5} $cols="60px 96px 94px 48px 30px">
                <Num $align="left">{`09:5${m}`}</Num>
                <Num $color={down ? TXT.white : TXT.red}>{down ? '5.02' : '5.03'}</Num>
                <Num $color={big ? TXT.magenta : TXT.yellow}>{v}<Unit>万</Unit></Num>
                <Num $color={down ? TXT.green : TXT.red} $align="center">{down ? 'S' : 'B'}</Num>
                <Num $color={n >= 10 ? TXT.dim : '#a0a0a0'}>{n}</Num>
              </Row>
            );
          })}
        </Panel>

        <Sidebar>
          {sideIcons.map((icon, i) =>
            icon === 'rule' ? <SideRule key={i} /> : <Slot key={i}>{icon}</Slot>
          )}
          {sidePeriods.map((s) => (
            <Slot key={s.t} $size={s.size} $active={s.active}>{s.t}</Slot>
          ))}
        </Sidebar>
      </Body>

      <StatusBar>
        <IndexBadge />
        {statusCells.map((s) => (
          <StatusCell key={s.t} $w={s.w} $color={s.c} $cjk={s.cjk}>
            {s.t}
            {s.unit && <StatusUnit>{s.unit}</StatusUnit>}
          </StatusCell>
        ))}
        <TotalCell $w={110} $cjk>总成交 2</TotalCell>
      </StatusBar>

      <Stamp>
        <StampTitle>公式指标网</StampTitle>
        <StampLogo />
        <StampUrl>www.9m8.cn</StampUrl>
      </Stamp>
    </Window>
  );
}
